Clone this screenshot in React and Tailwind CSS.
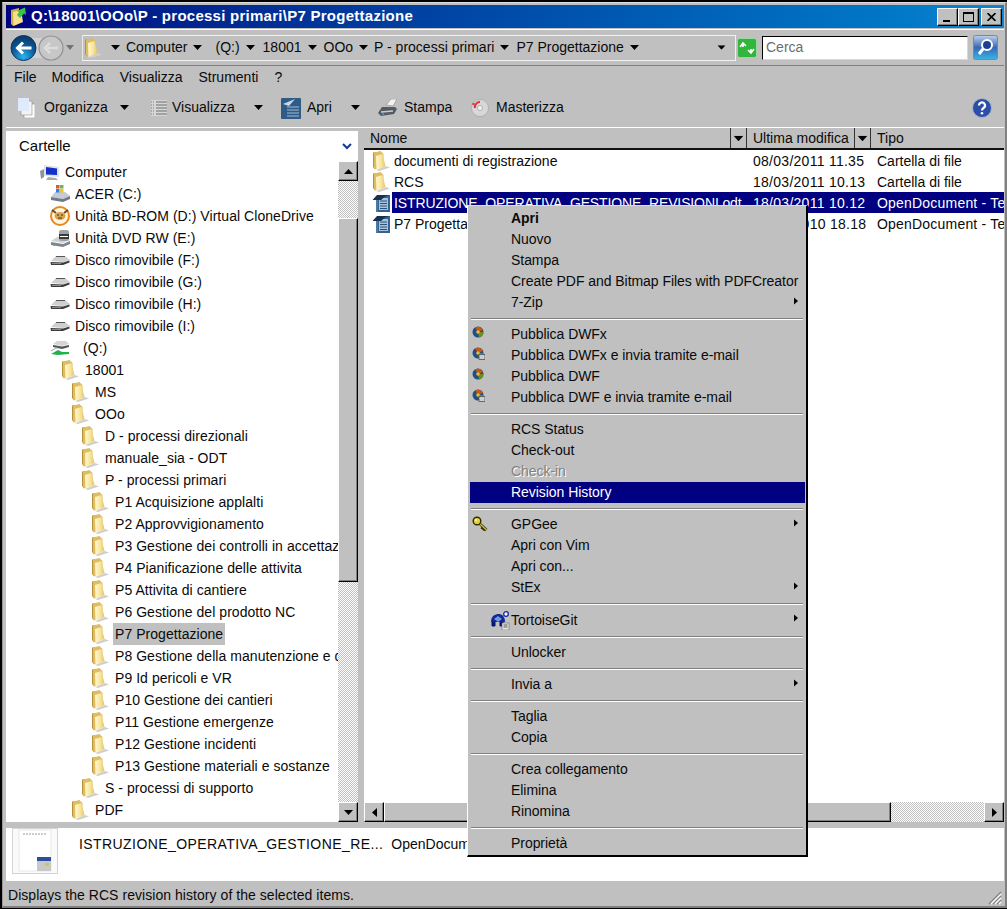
import { useId } from "react";

const font = "font-['Liberation_Sans',Arial,sans-serif]";
const raised = "border border-t-white border-l-white border-r-black border-b-black shadow-[inset_-1px_-1px_0_#808080]";
const checker = "bg-[repeating-conic-gradient(#c0c0c0_0_25%,#ffffff_0_50%)] bg-[length:2px_2px]";

// small black triangles
const Tri = ({ dir = "down", className = "" }) => {
  const pts = { down: "0,0 9,0 4.5,5", up: "0,5 9,5 4.5,0", left: "5,0 5,9 0,4.5", right: "0,0 0,9 5,4.5" }[dir];
  const size = dir === "left" || dir === "right" ? "w-[5px] h-[9px]" : "w-[9px] h-[5px]";
  const box = dir === "left" || dir === "right" ? "0 0 5 9" : "0 0 9 5";
  return (
    <svg viewBox={box} className={`${size} shrink-0 ${className}`}>
      <polygon points={pts} fill="#000" />
    </svg>
  );
};

const Folder = ({ className = "w-[18px] h-[20px]" }) => {
  const id = useId();
  return (
    <svg viewBox="0 0 18 20" className={`shrink-0 ${className}`}>
      <defs>
        <linearGradient id={id} x1="0" x2="1" y1="0" y2="0">
          <stop offset="0" stopColor="#fff9d2" />
          <stop offset="0.55" stopColor="#f8e59b" />
          <stop offset="1" stopColor="#e2c36a" />
        </linearGradient>
      </defs>
      <path d="M4 19 L14 15 L18 16.5 L7 20 Z" fill="#cfcfcf" />
      <path d="M1 1.5 L1 16 L3 18.5 L3 4 L9 2 L9 0.5 Z" fill="#b8923a" />
      <path d="M2 1.5 L8.5 0.3 L10 1.5 L11.5 3 L11.5 15 L3.5 18.5 L2 16.5 Z" fill="#e0bd60" />
      <path d="M4 5 L10.5 3 L13.5 15 L4.5 19 Z" fill={`url(#${id})`} />
    </svg>
  );
};

const DocIcon = () => (
  <svg viewBox="0 0 20 20" className="w-[20px] h-[20px] shrink-0">
    <path d="M5 2 H18 V19 H5 Z" fill="#35628f" />
    <path d="M7 5 H16 V17 H7 Z" fill="#a9c3db" />
    <path d="M0.5 7 L5 2 L17 2 L13 3.5 L9 7 Z" fill="#17324f" />
    <path d="M8 8h7M8 10.5h7M8 13h7M8 15.5h7" stroke="#29527a" strokeWidth="1" />
    <path d="M4 7 H6 V19 H4 Z" fill="#4a7aa8" />
  </svg>
);

const RemovableDrive = () => (
  <svg viewBox="0 0 20 14" className="w-[20px] h-[14px] shrink-0">
    <path d="M1 8 L6 3 H15 L20 7 L13 9 Z" fill="#cfcfcf" />
    <path d="M6 3.5 H15" stroke="#555" />
    <path d="M0.5 9 L13 9.5 L19.5 7.5 V9.5 L13 12 L1 12 Z" fill="#3d3d3d" />
    <path d="M2 10.5 H11" stroke="#8a8a8a" />
  </svg>
);

const TreeIcon = ({ type }) => {
  if (type === "computer")
    return (
      <svg viewBox="0 0 20 17" className="w-[20px] h-[17px] shrink-0">
        <path d="M0 7 L4 5 V13 L1 15 Z" fill="#8d939b" />
        <path d="M4 1 L19 3 V13 L4 12 Z" fill="#dfe3e8" />
        <path d="M6 3 L17 4.5 V11 L6 10.5 Z" fill="#1430c8" />
        <path d="M8 13 L16 14 L18 16 L6 16 Z" fill="#a6abb2" />
      </svg>
    );
  if (type === "windows")
    return (
      <svg viewBox="0 0 20 18" className="w-[20px] h-[18px] shrink-0">
        <path d="M1 12 L5 7 H15 L20 11 L13 14 Z" fill="#c4cbd4" />
        <path d="M1 12 L13 14 L20 11 V14 L13 17 L1 15 Z" fill="#6f7a86" />
        <rect x="6" y="0" width="3.5" height="3.5" fill="#e4572e" />
        <rect x="10" y="0" width="3.5" height="3.5" fill="#7cb342" />
        <rect x="6" y="4" width="3.5" height="3.5" fill="#2f80ed" />
        <rect x="10" y="4" width="3.5" height="3.5" fill="#f2c230" />
      </svg>
    );
  if (type === "clone")
    return (
      <svg viewBox="0 0 20 20" className="w-[20px] h-[20px] shrink-0">
        <circle cx="10" cy="10" r="9" fill="#fff5e0" stroke="#e8871e" strokeWidth="2" />
        <path d="M2 4 L6 7 M18 4 L14 7" stroke="#6b4a1e" strokeWidth="2" />
        <ellipse cx="10" cy="10" rx="5.5" ry="4" fill="#d9a24f" />
        <path d="M7 9h2M11 9h2M8 12h4" stroke="#4a2c0c" />
      </svg>
    );
  if (type === "dvd")
    return (
      <svg viewBox="0 0 20 20" className="w-[20px] h-[20px] shrink-0">
        <path d="M1 13 L7 9 H16 L20 12 L13 15 Z" fill="#cfd2d6" />
        <path d="M1 14 L13 16 L20 13 V16 L13 19 L1 17 Z" fill="#7f858c" />
        <rect x="9" y="2" width="10" height="11" rx="2" fill="#9ea3a8" />
        <rect x="9" y="6" width="10" height="5" fill="#3a3a3a" />
        <path d="M10 8.5h8" stroke="#fff" />
        <circle cx="4" cy="17" r="1" fill="#4caf50" />
      </svg>
    );
  if (type === "net")
    return (
      <svg viewBox="0 0 20 16" className="w-[20px] h-[16px] shrink-0">
        <path d="M3 4 L7 1 H16 L19 4 L12 6 Z" fill="#d5d5d5" />
        <path d="M3 5 L12 6.5 L19 5 V7 L12 9 L3 7 Z" fill="#555" />
        <path d="M1 14 L8 10 L12 12 L19 12 V14 L8 15 Z" fill="#22b14c" />
        <path d="M1 11 L6 8 H8" stroke="#9aa0a6" fill="none" />
      </svg>
    );
  if (type === "drive") return <RemovableDrive />;
  return <Folder />;
};

const tree = [
  { label: "Computer", icon: "computer", row: "pl-[34px]", gap: "mr-[5px]" },
  { label: "ACER (C:)", icon: "windows", row: "pl-[44px]", gap: "mr-[5px]" },
  { label: "Unità BD-ROM (D:) Virtual CloneDrive", icon: "clone", row: "pl-[44px]", gap: "mr-[5px]" },
  { label: "Unità DVD RW (E:)", icon: "dvd", row: "pl-[44px]", gap: "mr-[5px]" },
  { label: "Disco rimovibile (F:)", icon: "drive", row: "pl-[44px]", gap: "mr-[5px]" },
  { label: "Disco rimovibile (G:)", icon: "drive", row: "pl-[44px]", gap: "mr-[5px]" },
  { label: "Disco rimovibile (H:)", icon: "drive", row: "pl-[44px]", gap: "mr-[5px]" },
  { label: "Disco rimovibile (I:)", icon: "drive", row: "pl-[44px]", gap: "mr-[5px]" },
  { label: "(Q:)", icon: "net", row: "pl-[44px]", gap: "mr-[13px]" },
  { label: "18001", row: "pl-[55px]" },
  { label: "MS", row: "pl-[65px]" },
  { label: "OOo", row: "pl-[65px]" },
  { label: "D - processi direzionali", row: "pl-[75px]" },
  { label: "manuale_sia - ODT", row: "pl-[75px]" },
  { label: "P - processi primari", row: "pl-[75px]" },
  { label: "P1 Acquisizione applalti", row: "pl-[85px]" },
  { label: "P2 Approvvigionamento", row: "pl-[85px]" },
  { label: "P3 Gestione dei controlli in accettazione", row: "pl-[85px]" },
  { label: "P4 Pianificazione delle attivita", row: "pl-[85px]" },
  { label: "P5 Attivita di cantiere", row: "pl-[85px]" },
  { label: "P6 Gestione del prodotto NC", row: "pl-[85px]" },
  { label: "P7 Progettazione", row: "pl-[85px]", active: true },
  { label: "P8 Gestione della manutenzione e delle", row: "pl-[85px]" },
  { label: "P9 Id pericoli e VR", row: "pl-[85px]" },
  { label: "P10 Gestione dei cantieri", row: "pl-[85px]" },
  { label: "P11 Gestione emergenze", row: "pl-[85px]" },
  { label: "P12 Gestione incidenti", row: "pl-[85px]" },
  { label: "P13 Gestione materiali e sostanze", row: "pl-[85px]" },
  { label: "S - processi di supporto", row: "pl-[75px]" },
  { label: "PDF", row: "pl-[65px]" },
];

const crumbs = [
  { label: "Computer", cls: "ml-[6px]" },
  { label: "(Q:)", cls: "ml-[13px]" },
  { label: "18001", cls: "ml-[8px]" },
  { label: "OOo", cls: "ml-[7px]" },
  { label: "P - processi primari", cls: "ml-[6px]" },
  { label: "P7 Progettazione", cls: "ml-[7px]" },
];

const files = [
  { name: "documenti di registrazione", date: "08/03/2011 11.35", type: "Cartella di file", icon: "folder" },
  { name: "RCS", date: "18/03/2011 10.13", type: "Cartella di file", icon: "folder" },
  { name: "ISTRUZIONE_OPERATIVA_GESTIONE_REVISIONI.odt", date: "18/03/2011 10.12", type: "OpenDocument - Testo", icon: "doc", selected: true },
  { name: "P7 Progettazione.odt", date: "22/12/2010 18.18", type: "OpenDocument - Testo", icon: "doc" },
];

const Globe = ({ mail }) => (
  <svg viewBox="0 0 13 13" className="w-[13px] h-[13px]">
    <circle cx="6" cy="6" r="5.5" fill="#1f4f86" />
    <path d="M3 1.5 A5.5 5.5 0 0 1 11 4 L6 6 Z" fill="#c9570f" />
    <path d="M6 6 L11.5 6 A5.5 5.5 0 0 1 7 11.4 Z" fill="#6f8c1e" />
    <circle cx="6" cy="6" r="1.8" fill="#e8b93f" />
    {mail && <rect x="7" y="7.5" width="6" height="5" fill="#c9ced4" stroke="#444" strokeWidth="0.7" />}
  </svg>
);

const KeyIcon = () => (
  <svg viewBox="0 0 16 16" className="w-[16px] h-[16px]">
    <path d="M7.5 7.5 L14.5 14 M11 11 L9.5 13 M13 12.5 L11.5 14.5" stroke="#2e2c08" strokeWidth="2.6" />
    <path d="M7.5 7.5 L14.5 14" stroke="#d9c82e" strokeWidth="1.2" />
    <circle cx="5" cy="5" r="3.8" fill="#e3d23c" stroke="#2e2c08" strokeWidth="1.4" />
    <circle cx="4" cy="4" r="1" fill="#fff6a8" />
  </svg>
);

const TortoiseIcon = () => (
  <svg viewBox="0 0 20 19" className="w-[20px] h-[19px]">
    <path d="M1 11 C1 5 5 3 9 3 C13 3 15 7 15 11 Z" fill="#13249c" />
    <path d="M4 8 L8 5 L12 8 L8 11 Z" fill="#6a9bd8" />
    <path d="M2 11 V15 H5 V11 M10 11 V15 H13 V11" fill="#0b1470" stroke="#0b1470" />
    <circle cx="16" cy="3" r="2.3" fill="#fff" stroke="#13249c" strokeWidth="1.3" />
    <rect x="12" y="12" width="7" height="7" fill="#e6e6e6" stroke="#666" strokeWidth="0.6" />
    <path d="M13.5 14h4M13.5 16h4" stroke="#555" />
  </svg>
);

const menu = [
  [{ label: "Apri", bold: true }, { label: "Nuovo" }, { label: "Stampa" }, { label: "Create PDF and Bitmap Files with PDFCreator" }, { label: "7-Zip", sub: true }],
  [
    { label: "Pubblica DWFx", icon: <Globe /> },
    { label: "Pubblica DWFx e invia tramite e-mail", icon: <Globe mail /> },
    { label: "Pubblica DWF", icon: <Globe /> },
    { label: "Pubblica DWF e invia tramite e-mail", icon: <Globe mail /> },
  ],
  [{ label: "RCS Status" }, { label: "Check-out" }, { label: "Check-in", disabled: true }, { label: "Revision History", active: true }],
  [{ label: "GPGee", sub: true, icon: <KeyIcon /> }, { label: "Apri con Vim" }, { label: "Apri con..." }, { label: "StEx", sub: true }],
  [{ label: "TortoiseGit", sub: true, tortoise: true }],
  [{ label: "Unlocker" }],
  [{ label: "Invia a", sub: true }],
  [{ label: "Taglia" }, { label: "Copia" }],
  [{ label: "Crea collegamento" }, { label: "Elimina" }, { label: "Rinomina" }],
  [{ label: "Proprietà" }],
];

const MenuRow = ({ item }) => (
  <div
    className={`relative flex items-center ml-[2px] mr-[1px] pl-[41px] whitespace-nowrap ${item.tortoise ? "h-[22px]" : "h-[21px]"} ${
      item.active ? "bg-[#000080] text-white" : ""
    } ${item.bold ? "font-bold" : ""} ${item.disabled ? "text-[#808080] [text-shadow:1px_1px_0_#fff]" : ""}`}
  >
    {item.icon && <span className="absolute left-[2px] top-[2px]">{item.icon}</span>}
    {item.tortoise && (
      <span className="absolute left-[20px] top-[2px]">
        <TortoiseIcon />
      </span>
    )}
    {item.label}
    {item.sub && <Tri dir="right" className="absolute right-[7px] top-[5px] !w-[4px] !h-[8px]" />}
  </div>
);

const ContextMenu = () => (
  <div className="absolute left-[467px] top-[205px] w-[341px] h-[652px] bg-[#c0c0c0] text-[14px] tracking-[-0.05px] text-[#0a0a0a] border-t border-l border-t-[#dfdfdf] border-l-white border-r-2 border-b-2 border-r-black border-b-black pt-[2px]">
    {menu.map((group, i) => (
      <div key={i}>
        {i > 0 && (
          <div className="h-[11px] flex flex-col justify-center mx-[3px]">
            <div className="h-px bg-[#808080]" />
            <div className="h-px bg-white" />
          </div>
        )}
        {group.map((item) => (
          <MenuRow key={item.label} item={item} />
        ))}
      </div>
    ))}
  </div>
);

const WinButton = ({ children }) => (
  <div className={`w-[21px] h-[18px] flex items-center justify-center bg-[#c0c0c0] ${raised}`}>{children}</div>
);

const ToolBtn = ({ icon, label, cls, arrow }) => (
  <div className={`flex items-center ${cls}`}>
    {icon}
    <span>{label}</span>
    {arrow}
  </div>
);

export default function App() {
  return (
    <div className={`relative w-[1007px] h-[909px] overflow-hidden bg-black pl-[2px] pt-[2px] ${font}`}>
      <div className="w-[1005px] h-[906px] bg-[#c0c0c0] border-t border-l border-t-[#dfdfdf] border-l-[#9a9a9a] border-r-2 border-b-2 border-r-[#808080] border-b-[#808080] pl-[3px] pt-[2px] pr-[1px] flex flex-col text-[14px] text-[#0a0a0a]">
        {/* Title bar */}
        <div className="h-[23px] shrink-0 flex items-center bg-gradient-to-r from-[#000080] to-[#1084d0] pl-[4px] pr-[2px]">
          <svg viewBox="0 0 17 20" className="w-[17px] h-[20px] shrink-0">
            <path d="M1 3 L9 1 V16 L3 19 L1 17 Z" fill="#d2aa48" />
            <path d="M3 5 L11 3 L13 15 L3.5 19 Z" fill="#f6e08e" />
            <path d="M7 8 L9 5 L7 4 L15 0.5 L16 8 L14 6.5 L10 11 Z" fill="#36c34a" />
          </svg>
          <span className="ml-[4px] text-[15px] font-bold text-white tracking-[0.26px] whitespace-nowrap">Q:\18001\OOo\P - processi primari\P7 Progettazione</span>
          <div className="ml-auto flex">
            <WinButton>
              <div className="w-[7px] h-[2px] bg-black mt-[8px] mr-[2px]" />
            </WinButton>
            <WinButton>
              <div className="w-[11px] h-[10px] border border-black border-t-2" />
            </WinButton>
            <div className="w-[2px]" />
            <WinButton>
              <svg viewBox="0 0 9 8" className="w-[9px] h-[8px]">
                <path d="M0.5 0 L8.5 8 M8.5 0 L0.5 8" stroke="#000" strokeWidth="1.6" />
              </svg>
            </WinButton>
          </div>
        </div>

        {/* Address row */}
        <div className="h-[37px] shrink-0 mt-px flex items-center border-t border-t-white border-b border-b-[#808080]">
          <svg viewBox="0 0 60 26" className="w-[60px] h-[26px] shrink-0">
            <defs>
              <radialGradient id="backBlue" cx="0.5" cy="0.85" r="0.8">
                <stop offset="0" stopColor="#2bb4f0" />
                <stop offset="0.55" stopColor="#0d5c9c" />
                <stop offset="1" stopColor="#0a3a6e" />
              </radialGradient>
            </defs>
            <rect x="14" y="3" width="32" height="20" rx="10" fill="#d2d2d2" />
            <circle cx="45" cy="13" r="12" fill="#c7c7c7" stroke="#8f9397" strokeWidth="1.2" />
            <path d="M52 13 H39 M44 8 L39 13 L44 18" stroke="#dcdcdc" strokeWidth="2.6" fill="none" />
            <circle cx="17.5" cy="13" r="12.5" fill="url(#backBlue)" stroke="#0d3558" />
            <path d="M25.5 13 H11.5 M17 7.5 L11.5 13 L17 18.5" stroke="#fff" strokeWidth="3" fill="none" />
          </svg>
          <svg viewBox="0 0 8 5" className="w-[8px] h-[5px] shrink-0">
            <polygon points="0,0 8,0 4,5" fill="#6f7478" />
          </svg>
          <div className="ml-[8px] w-[654px] h-[26px] shrink-0 border border-[#f2f2f2] border-l-[#e8e8e8] flex items-center pl-[1px]">
            <Folder className="w-[18px] h-[20px]" />
            <Tri className="ml-[9px]" />
            {crumbs.map((c) => (
              <div key={c.label} className="flex items-center">
                <span className={c.cls}>{c.label}</span>
                <Tri className="ml-[6px]" />
              </div>
            ))}
            <Tri className="ml-auto mr-[9px] scale-90" />
          </div>
          <svg viewBox="0 0 20 20" className="w-[20px] h-[20px] ml-[1px] shrink-0">
            <rect x="0.5" y="0.5" width="19" height="19" rx="2" fill="#32b53c" stroke="#9bd79f" />
            <path d="M3 9 L6 5 L9 8 M6 5 V9 M17 11 L14 15 L11 12 M14 15 V11" stroke="#fff" strokeWidth="1.6" fill="none" />
          </svg>
          <div className="ml-[5px] w-[206px] h-[24px] shrink-0 bg-white border border-t-black border-l-black border-r-[#d8d8d8] border-b-[#d8d8d8] flex items-center pl-[3px] text-[#6d6d6d]">
            Cerca
          </div>
          <svg viewBox="0 0 25 25" className="w-[25px] h-[25px] ml-[5px] shrink-0">
            <defs>
              <linearGradient id="searchBlue" x1="0" x2="0" y1="0" y2="1">
                <stop offset="0" stopColor="#bcd2ee" />
                <stop offset="0.5" stopColor="#3a67b5" />
                <stop offset="1" stopColor="#34b7e8" />
              </linearGradient>
            </defs>
            <rect x="0.5" y="0.5" width="24" height="24" rx="2" fill="url(#searchBlue)" stroke="#7b8794" />
            <circle cx="14" cy="10" r="5" fill="#1a3f93" stroke="#fff" strokeWidth="2" />
            <path d="M10 14 L6 19" stroke="#fff" strokeWidth="3" />
          </svg>
        </div>

        {/* Menu bar */}
        <div className="h-[25px] shrink-0 flex items-center pl-[8px] pb-[2px]">
          <span>File</span>
          <span className="ml-[15px]">Modifica</span>
          <span className="ml-[16px]">Visualizza</span>
          <span className="ml-[16px]">Strumenti</span>
          <span className="ml-[16px]">?</span>
        </div>

        {/* Toolbar */}
        <div className="h-[37px] shrink-0 flex items-center pl-[12px] pr-[12px] pb-[3px] border-b border-b-white">
          <ToolBtn
            cls="w-[133px]"
            label="Organizza"
            icon={
              <svg viewBox="0 0 17 20" className="w-[17px] h-[20px] mr-[9px]">
                <rect x="6" y="6" width="11" height="14" fill="#fff" stroke="#8c8c8c" strokeWidth="0.6" />
                <rect x="3" y="3" width="11" height="14" fill="#f3f3f3" stroke="#8c8c8c" strokeWidth="0.6" />
                <rect x="0" y="0" width="11" height="13" fill="#dfeafa" />
              </svg>
            }
            arrow={<Tri className="ml-[12px]" />}
          />
          <ToolBtn
            cls="w-[130px]"
            label="Visualizza"
            icon={
              <svg viewBox="0 0 16 16" className="w-[16px] h-[16px] mr-[5px]">
                <rect x="0" y="0" width="16" height="16" fill="#d6d6d6" />
                <path d="M0 2h3M0 5h3M0 8h3M0 11h3M0 14h3" stroke="#d4574a" strokeDasharray="1 1" />
                <path d="M5 2h11M5 5h11M5 8h11M5 11h11M5 14h11" stroke="#6f6f6f" />
              </svg>
            }
            arrow={<Tri className="ml-[19px]" />}
          />
          <ToolBtn
            cls="w-[97px]"
            label="Apri"
            icon={
              <svg viewBox="0 0 20 22" className="w-[20px] h-[22px] mr-[6px]">
                <rect x="0" y="1" width="20" height="21" rx="1" fill="#2f5c86" />
                <path d="M2 7 L14 2 L8 9 Z" fill="#c8d8e8" />
                <path d="M6 10h12M6 13h12M6 16h12M6 19h12" stroke="#9fbcd6" />
              </svg>
            }
            arrow={<Tri className="ml-[19px]" />}
          />
          <ToolBtn
            cls="w-[93px]"
            label="Stampa"
            icon={
              <svg viewBox="0 0 20 17" className="w-[20px] h-[17px] mr-[6px]">
                <path d="M8 6 L13 0 H19 L15 7 Z" fill="#f2f2f2" stroke="#8a8a8a" strokeWidth="0.6" />
                <path d="M0 14 L4 8 H17 L19 10 L16 15 L3 17 Z" fill="#545b63" />
                <path d="M3 13 L15 12" stroke="#c8ccd1" strokeWidth="1.4" />
                <circle cx="5" cy="15" r="1" fill="#3aa0e0" />
              </svg>
            }
          />
          <ToolBtn
            cls=""
            label="Masterizza"
            icon={
              <svg viewBox="0 0 18 18" className="w-[18px] h-[18px] mr-[7px]">
                <circle cx="9" cy="9" r="8.5" fill="#d8d8d8" stroke="#a0a0a0" strokeWidth="0.6" />
                <path d="M4 9 A5 5 0 0 1 9 3" stroke="#e0303a" strokeWidth="2" fill="none" />
                <circle cx="2.5" cy="5" r="1.2" fill="#e0303a" />
                <circle cx="9" cy="9" r="2.5" fill="#f4f4f4" stroke="#8c8c8c" strokeWidth="0.6" />
              </svg>
            }
          />
          <svg viewBox="0 0 20 20" className="w-[20px] h-[20px] ml-auto">
            <circle cx="10" cy="10" r="9.5" fill="#2b4fa8" stroke="#a8b4cc" />
            <path d="M7 7.5 A3 3 0 1 1 11.5 10 C10.5 10.6 10 11 10 12.5" stroke="#fff" strokeWidth="2.2" fill="none" />
            <circle cx="10" cy="15.2" r="1.3" fill="#fff" />
          </svg>
        </div>

        {/* Panes */}
        <div className="h-[694px] shrink-0 flex">
          {/* Folder tree */}
          <div className="w-[352px] mt-[3px] bg-white flex flex-col shrink-0">
            <div className="h-[30px] shrink-0 flex items-center justify-between pl-[13px] pr-[6px] text-[15px]">
              <span>Cartelle</span>
              <svg viewBox="0 0 10 7" className="w-[10px] h-[7px]">
                <path d="M1 1 L5 5 L9 1" stroke="#0f3d91" strokeWidth="2" fill="none" />
              </svg>
            </div>
            <div className="flex h-[661px]">
              <div className="w-[332px] overflow-hidden">
                {tree.map((t) => (
                  <div key={t.label} className={`h-[22px] flex items-center whitespace-nowrap ${t.row}`}>
                    {t.icon ? (
                      <span className={`w-[20px] flex justify-center shrink-0 ${t.gap}`}>
                        <TreeIcon type={t.icon} />
                      </span>
                    ) : (
                      <span className="w-[24px] shrink-0">
                        <Folder />
                      </span>
                    )}
                    <span className={`px-[2px] -ml-[2px] h-[22px] leading-[23px] tracking-[0.05px] ${t.active ? "bg-[#c0c0c0]" : ""}`}>{t.label}</span>
                  </div>
                ))}
              </div>
              <div className="w-[20px] flex flex-col shrink-0">
                <div className={`h-[20px] shrink-0 flex items-center justify-center bg-[#c0c0c0] ${raised}`}>
                  <Tri dir="up" />
                </div>
                <div className={`h-[37px] shrink-0 ${checker}`} />
                <div className={`h-[364px] shrink-0 bg-[#c0c0c0] ${raised}`} />
                <div className={`flex-1 ${checker}`} />
                <div className={`h-[20px] shrink-0 flex items-center justify-center bg-[#c0c0c0] ${raised}`}>
                  <Tri />
                </div>
              </div>
            </div>
          </div>

          {/* File list */}
          <div className="ml-[6px] flex-1 flex flex-col min-w-0">
            <div className="h-[22px] shrink-0 flex items-center border-b-2 border-b-[#101010]">
              <span className="pl-[6px] pt-px w-[366px]">Nome</span>
              <div className="w-[17px] h-full border-x border-x-[#333] flex items-center justify-center">
                <Tri className="scale-110" />
              </div>
              <span className="pl-[6px] pt-px w-[107px]">Ultima modifica</span>
              <div className="w-[17px] h-full border-x border-x-[#333] flex items-center justify-center">
                <Tri className="scale-110" />
              </div>
              <span className="pl-[6px] pt-px">Tipo</span>
            </div>
            <div className="bg-white flex-1 min-h-0 overflow-hidden">
              <div className="h-[652px]">
                {files.map((f) => (
                  <div key={f.name} className="h-[21px] flex items-center whitespace-nowrap overflow-hidden">
                    <span className="w-[28px] pl-[8px] shrink-0">{f.icon === "folder" ? <Folder /> : <DocIcon />}</span>
                    <div className={`flex-1 flex h-full items-center pt-px ${f.selected ? "bg-[#000080] text-white" : ""}`}>
                      <span className={`w-[361px] pl-[2px] overflow-hidden ${f.selected ? "tracking-[-0.12px]" : ""}`}>{f.name}</span>
                      <span className="w-[124px] tracking-[0.27px]">{f.date}</span>
                      <span className={f.icon === "doc" ? "tracking-[0.2px]" : ""}>{f.type}</span>
                    </div>
                  </div>
                ))}
              </div>
              <div className="h-[20px] flex bg-[#c0c0c0]">
                <div className={`w-[20px] flex items-center justify-center bg-[#c0c0c0] ${raised}`}>
                  <Tri dir="left" />
                </div>
                <div className={`w-[507px] bg-[#c0c0c0] ${raised}`} />
                <div className={`flex-1 ${checker}`} />
                <div className={`w-[20px] flex items-center justify-center bg-[#c0c0c0] ${raised}`}>
                  <Tri dir="right" />
                </div>
              </div>
            </div>
          </div>
        </div>

        {/* Details pane */}
        <div className="h-[53px] shrink-0 mt-[6px] bg-white flex items-start whitespace-nowrap overflow-hidden">
          <svg viewBox="0 0 46 46" className="w-[46px] h-[46px] ml-[6px] mt-0 shrink-0">
            <rect x="0.5" y="0.5" width="45" height="45" fill="#fafafa" stroke="#d4d4d4" />
            <rect x="7" y="2" width="32" height="41" fill="#fff" stroke="#e8e8e8" />
            <path d="M11 6h24" stroke="#9a9a9a" strokeDasharray="2 1" />
            <rect x="25" y="29" width="14" height="14" fill="#c8c8c8" />
            <rect x="25" y="29" width="14" height="4" fill="#2d4e9e" />
            <rect x="33" y="35" width="4" height="3" fill="#d8c058" />
          </svg>
          <span className="ml-[21px] mt-[6px] tracking-[0.42px]">ISTRUZIONE_OPERATIVA_GESTIONE_RE...</span>
          <span className="ml-[8px] mt-[6px]">OpenDocument - Testo</span>
        </div>

        {/* Status bar */}
        <div className="h-[25px] shrink-0 flex items-center pl-[2px] pt-[3px] tracking-[0.05px] relative">
          Displays the RCS revision history of the selected items.
          <svg viewBox="0 0 14 14" className="w-[14px] h-[14px] absolute right-[2px] bottom-[1px]">
            <path d="M13 1 L1 13 M13 5 L5 13 M13 9 L9 13" stroke="#808080" strokeWidth="1.4" />
            <path d="M13 3 L3 13 M13 7 L7 13 M13 11 L11 13" stroke="#ffffff" strokeWidth="1.2" />
          </svg>
        </div>
      </div>

      <ContextMenu />
    </div>
  );
}
